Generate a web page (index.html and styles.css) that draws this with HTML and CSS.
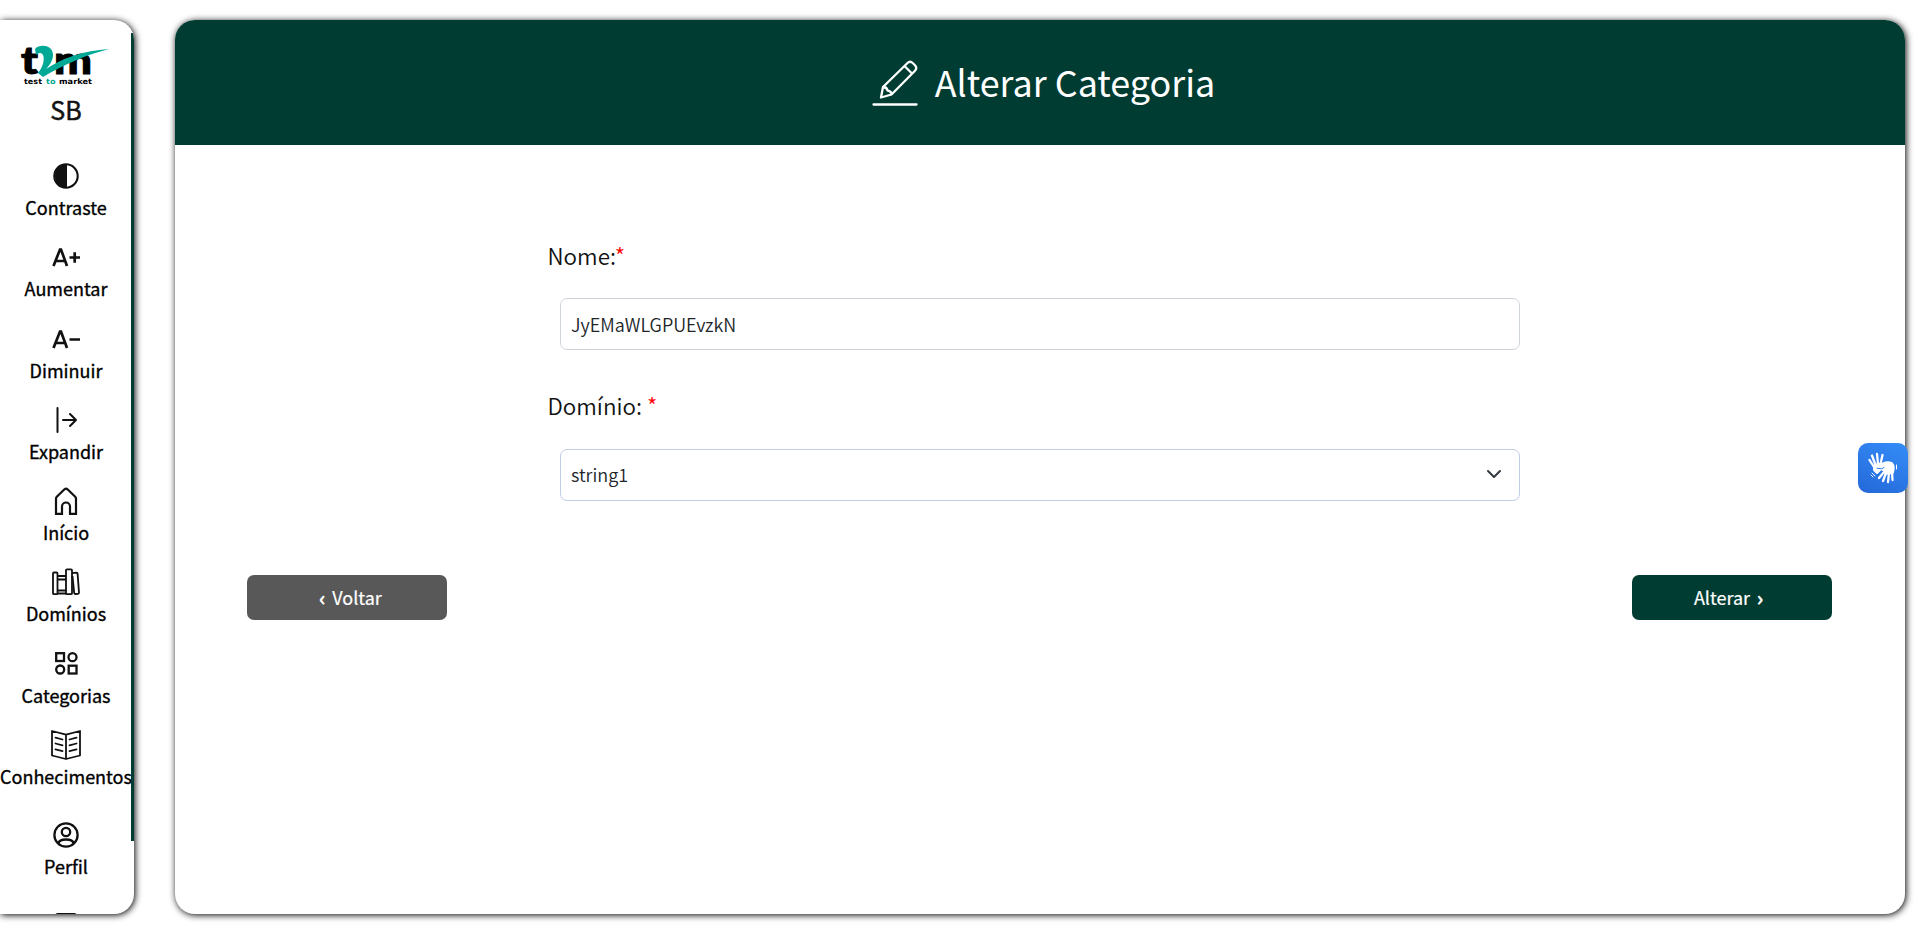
FILE: index.html
```
<!DOCTYPE html>
<html lang="pt-BR">
<head>
<meta charset="utf-8">
<title>Alterar Categoria</title>
<link rel="stylesheet" href="styles.css">
</head>
<body>
<div class="app">
  <nav class="sidebar">
    <div class="sidebar-content">
      <div class="brand">
        <svg class="logo" width="92" height="42" viewBox="0 0 92 42">
          <text class="logo-text" x="1" y="28.500" textLength="17" lengthAdjust="spacingAndGlyphs">t</text>
          <text class="logo-text" x="34" y="28.500" textLength="38" lengthAdjust="spacingAndGlyphs">m</text>
          <path d="M15 4C19-1 33-1 33 10C33 15 30 20 26 24C45 12 63 6 89 4C66 10 45 19 23 32L18 28C23 22 25 14 23 10C21 7 18 8 16 10Z" fill="#00a896"/>
          <text class="logo-tag" x="4" y="38.500" textLength="18" lengthAdjust="spacingAndGlyphs">test</text>
          <text class="logo-tag logo-tag-accent" x="26" y="38.500" textLength="9.500" lengthAdjust="spacingAndGlyphs">to</text>
          <text class="logo-tag" x="39" y="38.500" textLength="33" lengthAdjust="spacingAndGlyphs">market</text>
        </svg>
        <span class="brand-name">SB</span>
      </div>
      <a class="item"><span class="icon"><svg width="26" height="26" viewBox="0 0 26 26"><circle cx="13" cy="13" r="11.7" fill="none" stroke="#111" stroke-width="2.1"/><path d="M14 1A12 12 0 0 0 14 25Z" fill="#111"/></svg></span><span class="label">Contraste</span></a>
      <a class="item"><span class="icon"><svg width="28" height="20" viewBox="0 0 28 20"><path d="M1.500 19L8 2.500L9 2.500L15 19M4 14H13M17.500 10.500H28M22.700 5.300V15.700" fill="none" stroke="#111" stroke-width="2.700"/></svg></span><span class="label">Aumentar</span></a>
      <a class="item"><span class="icon"><svg width="28" height="20" viewBox="0 0 28 20"><path d="M1.500 19L8 2.500L9 2.500L15 19M4 14H13M17.500 10.500H28" fill="none" stroke="#111" stroke-width="2.700"/></svg></span><span class="label">Diminuir</span></a>
      <a class="item"><span class="icon"><svg width="22" height="26" viewBox="0 0 22 26"><path d="M2.500 1V25M8 13H21M15 7L21 13L15 19" fill="none" stroke="#111" stroke-width="2" stroke-linecap="round" stroke-linejoin="round"/></svg></span><span class="label">Expandir</span></a>
      <a class="item"><span class="icon"><svg width="24" height="28" viewBox="0 0 24 28"><path d="M2 26.800V11.500Q2 10.500 3 9.500L10.500 2.300Q12 1 13.500 2.300L21 9.500Q22 10.500 22 11.500V26.800H16V19.500A4 4 0 0 0 8 19.500V26.800Z" fill="none" stroke="#111" stroke-width="2.200"/></svg></span><span class="label">Início</span></a>
      <a class="item"><span class="icon"><svg width="28" height="28" viewBox="0 0 28 28" fill="none" stroke="#111" stroke-width="1.800"><rect x="1" y="4.500" width="4.500" height="21.700" rx="1"/><path d="M5.500 8H14M5.500 11.500H14M5.500 22.500H14M5.500 25.500H14"/><rect x="14" y="1.400" width="6" height="24.800" rx="1"/><path d="M20 5.200L24.500 4.600Q25.500 4.600 25.600 5.600L27 24.600Q27 25.700 26 25.800L23.500 26Q22.400 26 22.200 25L20.500 8"/></svg></span><span class="label">Domínios</span></a>
      <a class="item"><span class="icon"><svg width="23" height="23" viewBox="0 0 23 23" fill="none" stroke="#111" stroke-width="2.300"><rect x="1.200" y="1.200" width="7.800" height="7.800"/><circle cx="17.500" cy="5.200" r="4"/><circle cx="5.200" cy="17.500" r="4"/><rect x="13.700" y="13.700" width="7.800" height="7.800"/></svg></span><span class="label">Categorias</span></a>
      <a class="item"><span class="icon"><svg width="30" height="30" viewBox="0 0 30 30" fill="none" stroke="#111" stroke-width="1.800" stroke-linejoin="round" stroke-linecap="round"><path d="M15 4.700L1 1V25.500L15 29L29 25.500V1ZM15 4.700V29M4.500 7.700L11.500 9.500M4.500 13.500L11.500 15.300M4.500 19.300L11.500 21.100M25.500 7.700L18.500 9.500M25.500 13.500L18.500 15.300M25.500 19.300L18.500 21.100"/></svg></span><span class="label">Conhecimentos</span></a>
      <a class="item item-profile"><span class="icon"><svg width="26" height="26" viewBox="0 0 26 26" fill="none" stroke="#111" stroke-width="2.300"><circle cx="13" cy="13" r="11.600"/><circle cx="13" cy="10" r="4.200"/><path d="M5.300 21.500C6 18 9 17.500 13 17.500S20 18 20.700 21.500"/></svg></span><span class="label">Perfil</span></a>
      <a class="item item-exit"><span class="icon"><svg width="22" height="26" viewBox="0 0 22 26"><rect x="1" y="1" width="20" height="24" rx="2" fill="none" stroke="#111" stroke-width="2"/></svg></span></a>
    </div>
    <div class="scroll-thumb"></div>
  </nav>
  <main class="card">
    <header class="card-header">
      <svg class="pencil" width="46" height="46" viewBox="0 0 46 46" fill="none" stroke="#fff" stroke-width="2.300" stroke-linecap="round" stroke-linejoin="round"><path d="M1.500 44.500H44.500"/><path d="M9 37.500L11 27L35.500 3Q38 .5 40.700 3L43 5.300Q45.500 8 43 10.700L19.500 34.500L9 37.500ZM11 27C14 27 15 28 15.500 30.500C18.500 31 19.500 32 19.500 34.500M32.500 6L40 13.500"/></svg>
      <h1 class="title">Alterar Categoria</h1>
    </header>
    <form class="form">
      <div class="field">
        <label class="field-label">Nome:<span class="required">*</span></label>
        <div class="control">JyEMaWLGPUEvzkN</div>
      </div>
      <div class="field">
        <label class="field-label">Domínio: <span class="required">*</span></label>
        <div class="control control-select">string1<svg width="16" height="16" viewBox="0 0 16 16"><path d="M2 5L8 11L14 5" fill="none" stroke="#343a40" stroke-width="2" stroke-linecap="round" stroke-linejoin="round"/></svg></div>
      </div>
    </form>
    <div class="actions">
      <button class="btn btn-back"><span class="chevron">‹</span>Voltar</button>
      <button class="btn btn-submit">Alterar<span class="chevron">›</span></button>
    </div>
  </main>
</div>
<div class="access">
  <svg width="30" height="32" viewBox="0 0 30 32" fill="none" stroke="#fff" stroke-linecap="round" stroke-linejoin="round"><path d="M6 14L10 12L14 12L12 18L9 21L6 18Z" fill="#fff" stroke-width="2"/><path d="M6 15L1.500 8M7.500 13L4 3.500M10 12L9 2M12.500 12L14.500 3" stroke-width="2.300"/><path d="M10 15C15 10 20 9 24 11C27 14 26 18 25 21L18 22L15 18L11 17Z" fill="#fff" stroke-width="1.500"/><path d="M9 16.200L13.500 16.800L16 15.500" stroke="#2f7de8" stroke-width="1"/><path d="M16 20L11 26M18 21L15 29M21 21L20 30M24 20L24.500 28" stroke-width="2.300"/><path d="M28.500 13V17M4 21L7 24M3 23L5 25" stroke-width="1"/></svg>
</div>
</body>
</html>
```
FILE: styles.css
```
* { box-sizing: border-box; }
body {
  margin: 0;
  height: 934px;
  overflow: hidden;
  background: #fff;
  color: #111;
  font-family: "Noto Sans CJK JP", "Noto Sans", sans-serif;
}
.app {
  display: flex;
  gap: 41px;
  height: 934px;
  padding: 20px 15px 20px 0;
}
.sidebar {
  position: relative;
  width: 134px;
  flex: none;
  overflow: hidden;
  border-radius: 0 20px 20px 0;
  box-shadow: 1px 1px 7px #000;
}
.sidebar-content {
  display: flex;
  flex-direction: column;
  width: 132px;
}
.scroll-thumb {
  position: absolute;
  top: 13px;
  right: 0;
  width: 3px;
  height: 808px;
  background: #003c32;
}
.brand {
  display: flex;
  flex: none;
  flex-direction: column;
  align-items: center;
  height: 140px;
  padding-top: 25px;
}
.logo { display: block; overflow: visible; }
.logo-text {
  font: 900 38px Lato, sans-serif;
  fill: #000;
  stroke: #000;
  stroke-width: 1px;
}
.logo-tag { font: bold 7.5px "DejaVu Sans", sans-serif; fill: #000; }
.logo-tag-accent { fill: #00a896; }
.brand-name {
  margin-top: 3px;
  font-size: 25px;
  line-height: 38px;
  -webkit-text-stroke: 0.5px #111;
}
.item {
  display: flex;
  flex: none;
  flex-direction: column;
  align-items: center;
  height: 81.3px;
}
.item-profile { margin-top: 8.5px; }
.item-exit { margin-top: 10px; }
.icon {
  display: flex;
  align-items: center;
  justify-content: center;
  height: 32px;
}
.icon svg { display: block; }
.label {
  color: #000;
  font-size: 18px;
  line-height: 31px;
  white-space: nowrap;
  -webkit-text-stroke: 0.35px #000;
}
.card {
  display: flex;
  flex: 1;
  flex-direction: column;
  overflow: hidden;
  border-radius: 20px;
  box-shadow: 1px 1px 7px #000;
}
.card-header {
  display: flex;
  flex: none;
  align-items: center;
  justify-content: center;
  gap: 17px;
  height: 125px;
  padding-left: 7px;
  background: #003c32;
  color: #fff;
}
.title {
  margin: 0;
  padding-bottom: 3px;
  font-size: 35.9px;
  font-weight: 400;
  line-height: 54px;
}
.form {
  display: flex;
  flex-direction: column;
  gap: 38px;
  width: 984px;
  margin: 92px 0 0 372px;
}
.field-label {
  display: block;
  height: 36px;
  padding-left: 0.5px;
  font-size: 22.4px;
  font-weight: 350;
  line-height: 36px;
}
.required { color: #f00; }
.control {
  display: flex;
  align-items: center;
  justify-content: space-between;
  width: 960px;
  height: 52px;
  margin: 25px 0 0 13px;
  padding: 0 17px 1px 10px;
  border: 1px solid #ced4da;
  border-radius: 7px;
  color: #212529;
  font-size: 18px;
  font-weight: 350;
}
.field + .field { margin-top: -1px; }
.field + .field .control { margin-top: 26px; padding-bottom: 2px; }
.control-select { border-color: #c0cee4; }
.actions {
  display: flex;
  justify-content: space-between;
  margin-top: 74px;
  padding: 0 73px 0 72px;
}
.btn {
  display: flex;
  align-items: center;
  justify-content: center;
  width: 200px;
  height: 45px;
  padding: 0 0 1px;
  border: 0;
  border-radius: 7px;
  color: #fff;
  font-family: inherit;
  font-size: 18px;
  -webkit-text-stroke: 0.2px #fff;
}
.chevron {
  width: 20px;
  font-size: 20px;
  text-align: center;
  -webkit-text-stroke: 0.7px #fff;
}
.btn-back { background: #585858; }
.btn-submit { background: #003c32; }
.access {
  position: absolute;
  top: 443px;
  right: 12px;
  display: flex;
  align-items: center;
  justify-content: center;
  width: 50px;
  height: 50px;
  border-radius: 10px;
  background: linear-gradient(25deg, #2468d8, #348df8);
}
```
